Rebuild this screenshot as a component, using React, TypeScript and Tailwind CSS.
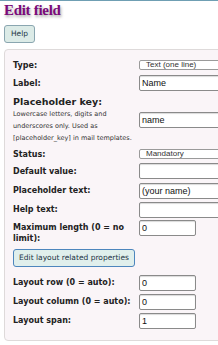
import React from "react";

const lbl = "font-['DejaVu_Sans',sans-serif] font-bold text-[8px] leading-[11px] text-[#222]";
const inp = "h-[16px] border border-[#8a8a8a] rounded-[2px] bg-white px-[2px] text-[9px] leading-[14px] font-['Liberation_Sans',sans-serif] text-[#111] shadow-[inset_0_1px_1px_rgba(0,0,0,0.15)]";
const sel = "h-[10px] border border-[#9a9a9a] rounded-[2px] bg-white pl-[6px] text-[8px] leading-[8px] font-['Liberation_Sans',sans-serif] text-[#333]";

function Row({ label, h, children, top }: { label: React.ReactNode; h: string; children: React.ReactNode; top?: boolean }) {
  return (
    <div className={`flex ${top ? "items-start" : "items-center"} ${h}`}>
      <div className={`w-[126px] shrink-0 ${lbl}`}>{label}</div>
      <div className="flex-1 min-w-0">{children}</div>
    </div>
  );
}

export default function App() {
  return (
    <div className="w-[218px] h-[345px] overflow-hidden bg-white relative">
      <div className="h-[1px] bg-[#6f9fb3] w-full" />
      <div className="pl-[4px] pt-[1px]">
        <div className="font-['Liberation_Serif',serif] font-bold text-[15px] leading-[16px] text-[#7a0a7a] [text-shadow:1px_2px_3px_rgba(0,0,0,0.35)] tracking-[-0.3px]">
          Edit field
        </div>
        <div className="mt-[7px] w-[31px] h-[18px] rounded-[3px] border border-[#8aa6b0] bg-[#dcebe7] flex items-center justify-center text-[7.5px] font-['DejaVu_Sans',sans-serif] text-[#234]">
          Help
        </div>
      </div>
      <div className="mt-[6px] ml-[4px] w-[240px] h-[292px] bg-[#faf5f8] border border-[#dedada] rounded-[4px] pl-[8px] pt-[7px]">
        <Row label="Type:" h="h-[16px]">
          <div className={`${sel} w-[100px]`}>Text (one line)</div>
        </Row>
        <Row label="Label:" h="h-[20px]">
          <div className={`${inp} w-[100px]`}>Name</div>
        </Row>
        <div className="flex items-center h-[54px]">
          <div className="w-[126px] shrink-0">
            <div className="font-['DejaVu_Sans',sans-serif] font-bold text-[9.5px] leading-[12px] text-[#222]">Placeholder key:</div>
            <div className="font-['DejaVu_Sans',sans-serif] text-[6.5px] leading-[12px] text-[#333] whitespace-nowrap">
              Lowercase letters, digits and<br />underscores only. Used as<br />[placeholder_key] in mail templates.
            </div>
          </div>
          <div className="flex-1 min-w-0">
            <div className={`${inp} w-[100px]`}>name</div>
          </div>
        </div>
        <Row label="Status:" h="h-[14px]">
          <div className={`${sel} w-[100px]`}>Mandatory</div>
        </Row>
        <Row label="Default value:" h="h-[20px]">
          <div className={`${inp} w-[100px]`}></div>
        </Row>
        <Row label="Placeholder text:" h="h-[19px]">
          <div className={`${inp} w-[100px]`}>(your name)</div>
        </Row>
        <Row label="Help text:" h="h-[19px]">
          <div className={`${inp} w-[100px]`}></div>
        </Row>
        <div className="flex items-start h-[30px] pt-[1px]">
          <div className={`w-[126px] shrink-0 ${lbl} pt-[2px]`}>
            Maximum length (0 = no<br />limit):
          </div>
          <div className={`${inp} w-[57px]`}>0</div>
        </div>
        <div className="w-[122px] h-[18px] rounded-[3px] border border-[#4d86bd] bg-[#e0efec] flex items-center justify-center text-[7.5px] font-['DejaVu_Sans',sans-serif] text-[#234] whitespace-nowrap">
          Edit layout related properties
        </div>
        <div className="h-[6px]" />
        <Row label="Layout row (0 = auto):" h="h-[19px]">
          <div className={`${inp} w-[57px]`}>0</div>
        </Row>
        <Row label="Layout column (0 = auto):" h="h-[19px]">
          <div className={`${inp} w-[57px]`}>0</div>
        </Row>
        <Row label="Layout span:" h="h-[19px]">
          <div className={`${inp} w-[57px]`}>1</div>
        </Row>
      </div>
    </div>
  );
}
